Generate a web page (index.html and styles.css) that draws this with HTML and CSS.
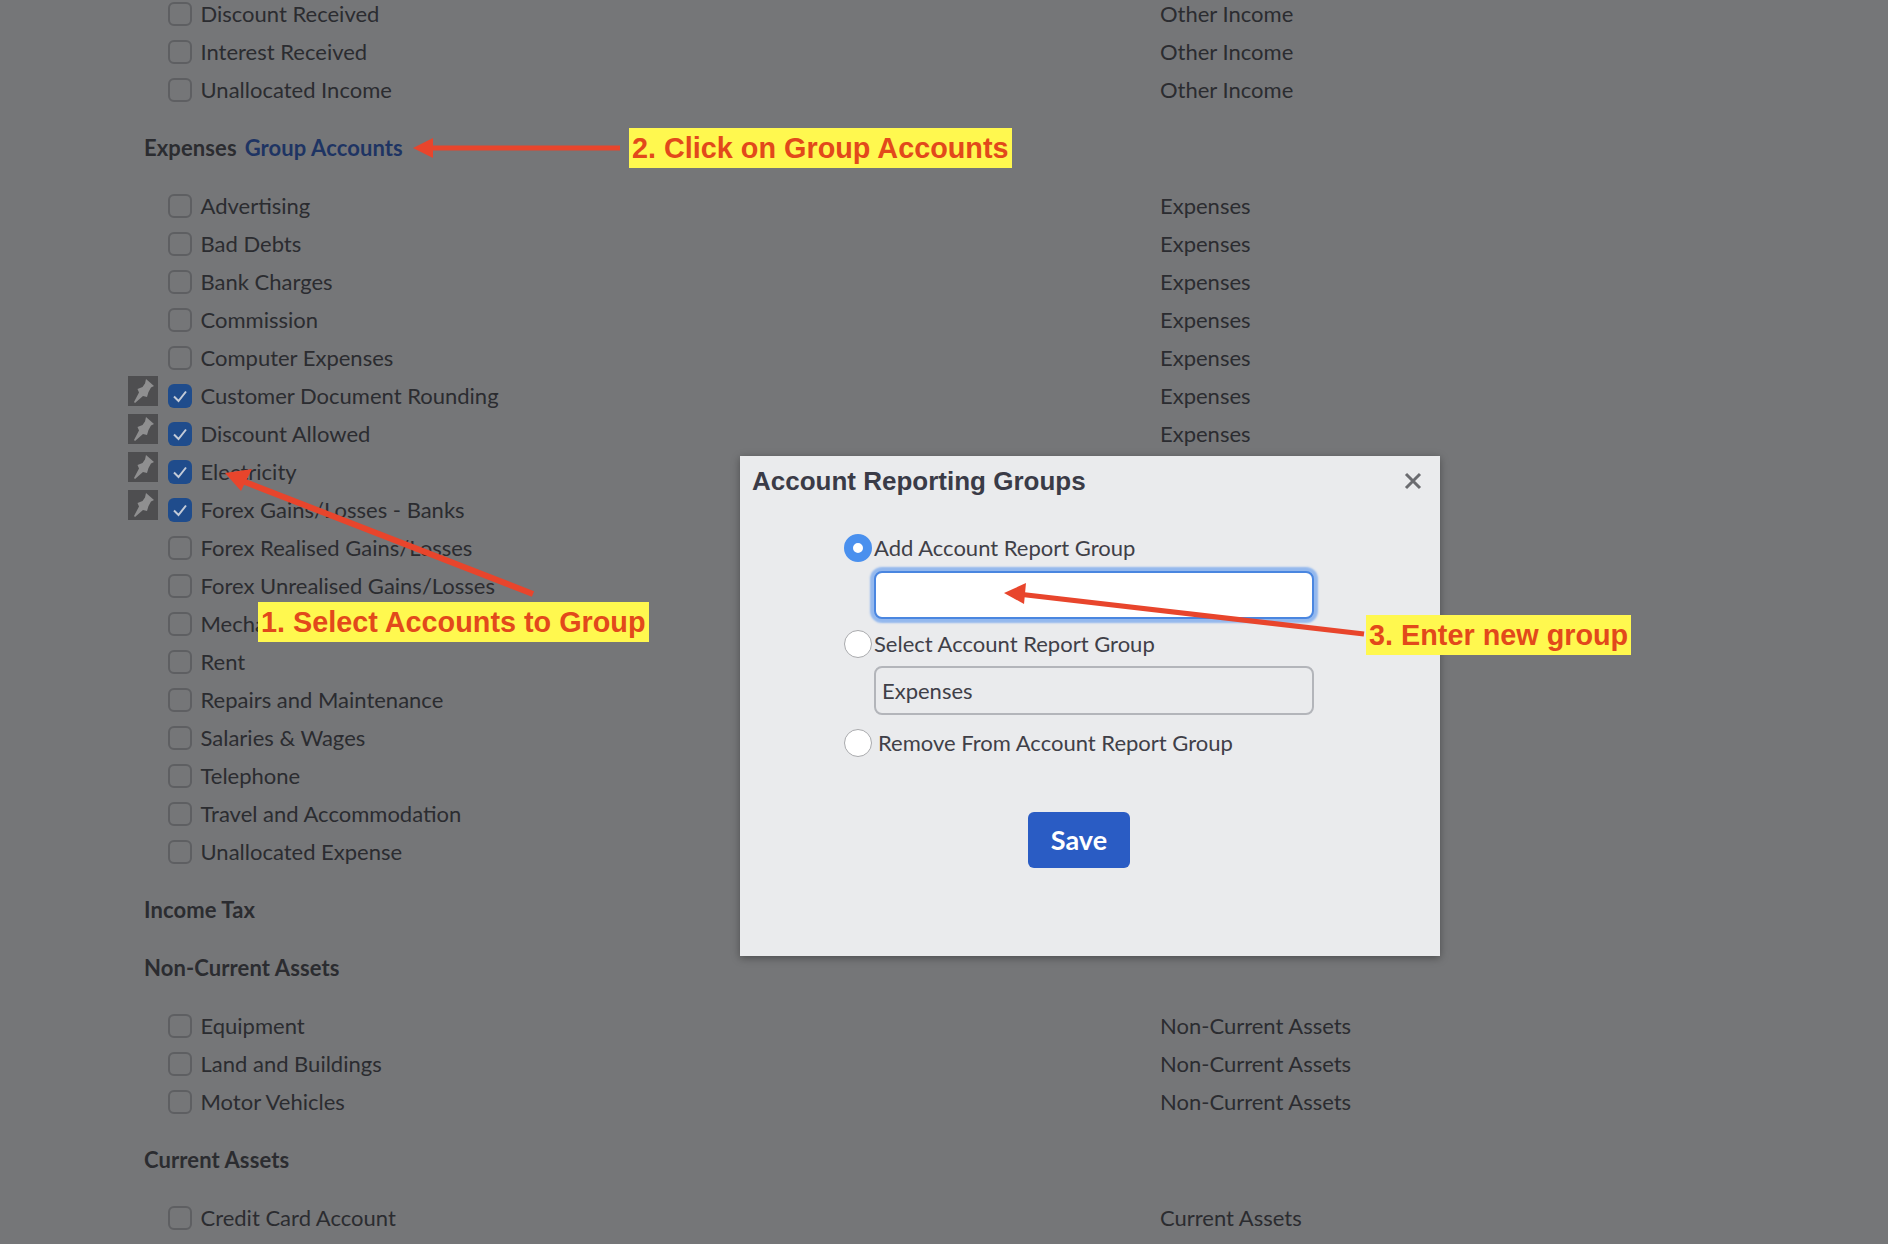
FILE: index.html
```html
<!DOCTYPE html>
<html lang="en">
	<head>
		<meta charset="utf-8" />
		<meta name="viewport" content="width=device-width, initial-scale=1.0" />
		<title>Account Reporting Groups</title>
		<link rel="stylesheet" href="styles.css">
	</head>

	<body>
		<svg class="defs" width="0" height="0">
			<symbol id="pin" viewBox="0 0 30 30">
				<path d="M18 3 L26 10 L23 11.5 L20.5 16 L19 21 L15 20 L7 27 L6 26 L11 16.5 L9.5 13 L14.5 11 L17 7.5 Z" />
			</symbol>
			<symbol id="tick" viewBox="0 0 24 24">
				<path d="M6 12.5 L10.5 17 L18 7.5" />
			</symbol>
		</svg>

		<main class="accounts">
			<ul class="rows">
				<li class="row"><span class="check"></span><span class="name">Discount Received</span><span class="type">Other Income</span></li>
				<li class="row"><span class="check"></span><span class="name">Interest Received</span><span class="type">Other Income</span></li>
				<li class="row"><span class="check"></span><span class="name">Unallocated Income</span><span class="type">Other Income</span></li>
			</ul>

			<h2 class="group">Expenses <a class="group-link" href="#">Group Accounts</a></h2>
			<ul class="rows">
				<li class="row"><span class="check"></span><span class="name">Advertising</span><span class="type">Expenses</span></li>
				<li class="row"><span class="check"></span><span class="name">Bad Debts</span><span class="type">Expenses</span></li>
				<li class="row"><span class="check"></span><span class="name">Bank Charges</span><span class="type">Expenses</span></li>
				<li class="row"><span class="check"></span><span class="name">Commission</span><span class="type">Expenses</span></li>
				<li class="row"><span class="check"></span><span class="name">Computer Expenses</span><span class="type">Expenses</span></li>
				<li class="row">
					<span class="pin"><svg><use href="#pin" /></svg></span>
					<span class="check checked"><svg><use href="#tick" /></svg></span><span class="name">Customer Document Rounding</span><span class="type">Expenses</span>
				</li>
				<li class="row">
					<span class="pin"><svg><use href="#pin" /></svg></span>
					<span class="check checked"><svg><use href="#tick" /></svg></span><span class="name">Discount Allowed</span><span class="type">Expenses</span>
				</li>
				<li class="row">
					<span class="pin"><svg><use href="#pin" /></svg></span>
					<span class="check checked"><svg><use href="#tick" /></svg></span><span class="name">Electricity</span><span class="type">Expenses</span>
				</li>
				<li class="row">
					<span class="pin"><svg><use href="#pin" /></svg></span>
					<span class="check checked"><svg><use href="#tick" /></svg></span><span class="name">Forex Gains/Losses - Banks</span><span class="type">Expenses</span>
				</li>
				<li class="row"><span class="check"></span><span class="name">Forex Realised Gains/Losses</span><span class="type">Expenses</span></li>
				<li class="row"><span class="check"></span><span class="name">Forex Unrealised Gains/Losses</span><span class="type">Expenses</span></li>
				<li class="row"><span class="check"></span><span class="name">Mechanical</span><span class="type">Expenses</span></li>
				<li class="row"><span class="check"></span><span class="name">Rent</span><span class="type">Expenses</span></li>
				<li class="row"><span class="check"></span><span class="name">Repairs and Maintenance</span><span class="type">Expenses</span></li>
				<li class="row"><span class="check"></span><span class="name">Salaries &amp; Wages</span><span class="type">Expenses</span></li>
				<li class="row"><span class="check"></span><span class="name">Telephone</span><span class="type">Expenses</span></li>
				<li class="row"><span class="check"></span><span class="name">Travel and Accommodation</span><span class="type">Expenses</span></li>
				<li class="row"><span class="check"></span><span class="name">Unallocated Expense</span><span class="type">Expenses</span></li>
			</ul>

			<h2 class="group">Income Tax</h2>

			<h2 class="group">Non-Current Assets</h2>
			<ul class="rows">
				<li class="row"><span class="check"></span><span class="name">Equipment</span><span class="type">Non-Current Assets</span></li>
				<li class="row"><span class="check"></span><span class="name">Land and Buildings</span><span class="type">Non-Current Assets</span></li>
				<li class="row"><span class="check"></span><span class="name">Motor Vehicles</span><span class="type">Non-Current Assets</span></li>
			</ul>

			<h2 class="group">Current Assets</h2>
			<ul class="rows">
				<li class="row"><span class="check"></span><span class="name">Credit Card Account</span><span class="type">Current Assets</span></li>
			</ul>
		</main>

		<section class="modal">
			<header class="modal-head">
				<h3 class="modal-title">Account Reporting Groups</h3>
				<span class="modal-close">
					<svg viewBox="0 0 18 18"><path d="M2 2 L16 16 M16 2 L2 16" /></svg>
				</span>
			</header>

			<form class="modal-form">
				<div class="option">
					<span class="radio selected"></span>
					<span class="option-text">Add Account Report Group</span>
				</div>
				<div class="field field-focus"></div>
				<div class="option option-second">
					<span class="radio"></span>
					<span class="option-text">Select Account Report Group</span>
				</div>
				<div class="field field-select">Expenses</div>
				<div class="option option-third">
					<span class="radio"></span>
					<span class="option-text option-gap">Remove From Account Report Group</span>
				</div>
				<div class="actions">
					<button class="save" type="button">Save</button>
				</div>
			</form>
		</section>

		<!-- annotations drawn on top of the screenshot -->
		<svg class="arrows" viewBox="0 0 1888 1244">
			<g>
				<line class="arrow-thick" x1="533" y1="594" x2="240" y2="480" />
				<polygon points="225,473 252,469 241,491" />
				<line x1="620" y1="148" x2="430" y2="148" />
				<polygon points="413,148 433,138 433,158" />
				<line x1="1364" y1="634" x2="1018" y2="594" />
				<polygon points="1004,593 1026,583 1024,604" />
			</g>
		</svg>
		<div class="note note-one">1. Select Accounts to Group</div>
		<div class="note note-two">2. Click on Group Accounts</div>
		<div class="note note-three">3. Enter new group</div>
	</body>
</html>
```

FILE: styles.css
```css
html,
body {
	height: 100%;
}

body {
	position: relative;
	margin: 0;
	overflow: hidden;
	background: #757678;
	color: #2b2c30;
	font-family: Lato, "Open Sans", sans-serif;
	font-size: 22px;
}

.defs {
	position: absolute;
}

.accounts {
	margin-top: -5px;
	padding-left: 144px;
}

.rows {
	margin: 0;
	padding: 0;
	list-style: none;
}

.row {
	position: relative;
	display: flex;
	align-items: center;
	height: 38px;
	padding-left: 24px;
}

.name {
	width: 959.5px;
	margin-left: 8.5px;
	padding-bottom: 2px;
	white-space: nowrap;
}

.type {
	padding-bottom: 2px;
}

.check {
	flex: none;
	box-sizing: border-box;
	width: 24px;
	height: 24px;
	border: 2px solid #5e5f62;
	border-radius: 6px;
	background: #757678;
}

.check.checked {
	border: none;
	background: #1f4c8c;
}

.check svg {
	display: block;
	width: 24px;
	height: 24px;
	fill: none;
	stroke: #c3cbd8;
	stroke-width: 2;
}

.pin {
	position: absolute;
	left: -16px;
	top: -1px;
	width: 30px;
	height: 30px;
	background: #4e4e50;
}

.pin svg {
	display: block;
	width: 30px;
	height: 30px;
	fill: #8f8f90;
	filter: blur(0.7px);
}

.group {
	display: flex;
	gap: 8px;
	align-items: center;
	height: 36px;
	margin: 20px 0;
	padding-bottom: 2px;
	font-size: 22px;
	font-weight: 700;
	letter-spacing: 0.1px;
}

.group-link {
	color: #1e3463;
	text-decoration: none;
}

.modal {
	position: absolute;
	left: 740px;
	top: 456px;
	box-sizing: border-box;
	width: 700px;
	height: 500px;
	background: #eaebed;
	box-shadow: 0 2px 8px rgba(0, 0, 0, 0.35);
	color: #3f4048;
}

.modal-head {
	display: flex;
	justify-content: space-between;
	align-items: center;
	height: 50px;
	padding: 0 18px 0 12px;
}

.modal-title {
	margin: 0;
	color: #3a3b47;
	font-family: "Liberation Sans", Arial, sans-serif;
	font-size: 26px;
	font-weight: 700;
}

.modal-close svg {
	display: block;
	width: 18px;
	height: 18px;
	fill: none;
	stroke: #6b6c70;
	stroke-width: 3;
}

.modal-form {
	padding: 22px 0 0 104px;
}

.option {
	display: flex;
	align-items: center;
	height: 40px;
}

.option-text {
	padding-bottom: 2px;
}

.option-second {
	margin-top: 5px;
}

.option-third {
	margin-top: 8px;
}

.option-gap {
	margin-left: 4px;
}

.radio {
	flex: none;
	box-sizing: border-box;
	width: 28px;
	height: 28px;
	margin-right: 2px;
	border: 1px solid #a9aaad;
	border-radius: 50%;
	background: #fff;
}

.radio.selected {
	border: 9px solid #4a90ee;
}

.field {
	box-sizing: border-box;
	width: 440px;
	height: 49px;
	margin-left: 30px;
	padding: 0 6px;
	border: 2px solid #b3b5ba;
	border-radius: 8px;
	line-height: 45px;
}

.field-focus {
	height: 48px;
	margin-top: 3px;
	border-color: #4a86e0;
	background: #fff;
	box-shadow: 0 0 2px 4px #93b8ee;
}

.field-select {
	margin-top: 2px;
}

.actions {
	display: flex;
	justify-content: center;
	width: 470px;
	margin-top: 49px;
}

.save {
	width: 102px;
	height: 56px;
	padding: 0 0 2px;
	border: none;
	border-radius: 6px;
	background: #2a5cc4;
	color: #fff;
	font-family: Lato, sans-serif;
	font-size: 27px;
	font-weight: 700;
}

.arrows {
	position: absolute;
	left: 0;
	top: 0;
	width: 1888px;
	height: 1244px;
	pointer-events: none;
}

.arrows line {
	stroke: #e8452c;
	stroke-width: 5;
}

.arrows .arrow-thick {
	stroke-width: 6;
}

.arrows polygon {
	fill: #e8452c;
}

.note {
	position: absolute;
	height: 40px;
	padding: 0 3px;
	background: #fff84f;
	color: #e2491b;
	font-family: "Liberation Sans", Arial, sans-serif;
	font-size: 28.8px;
	font-weight: 700;
	line-height: 40px;
	white-space: nowrap;
}

.note-one {
	left: 258px;
	top: 602px;
}

.note-two {
	left: 629px;
	top: 128px;
}

.note-three {
	left: 1366px;
	top: 615px;
}
```
